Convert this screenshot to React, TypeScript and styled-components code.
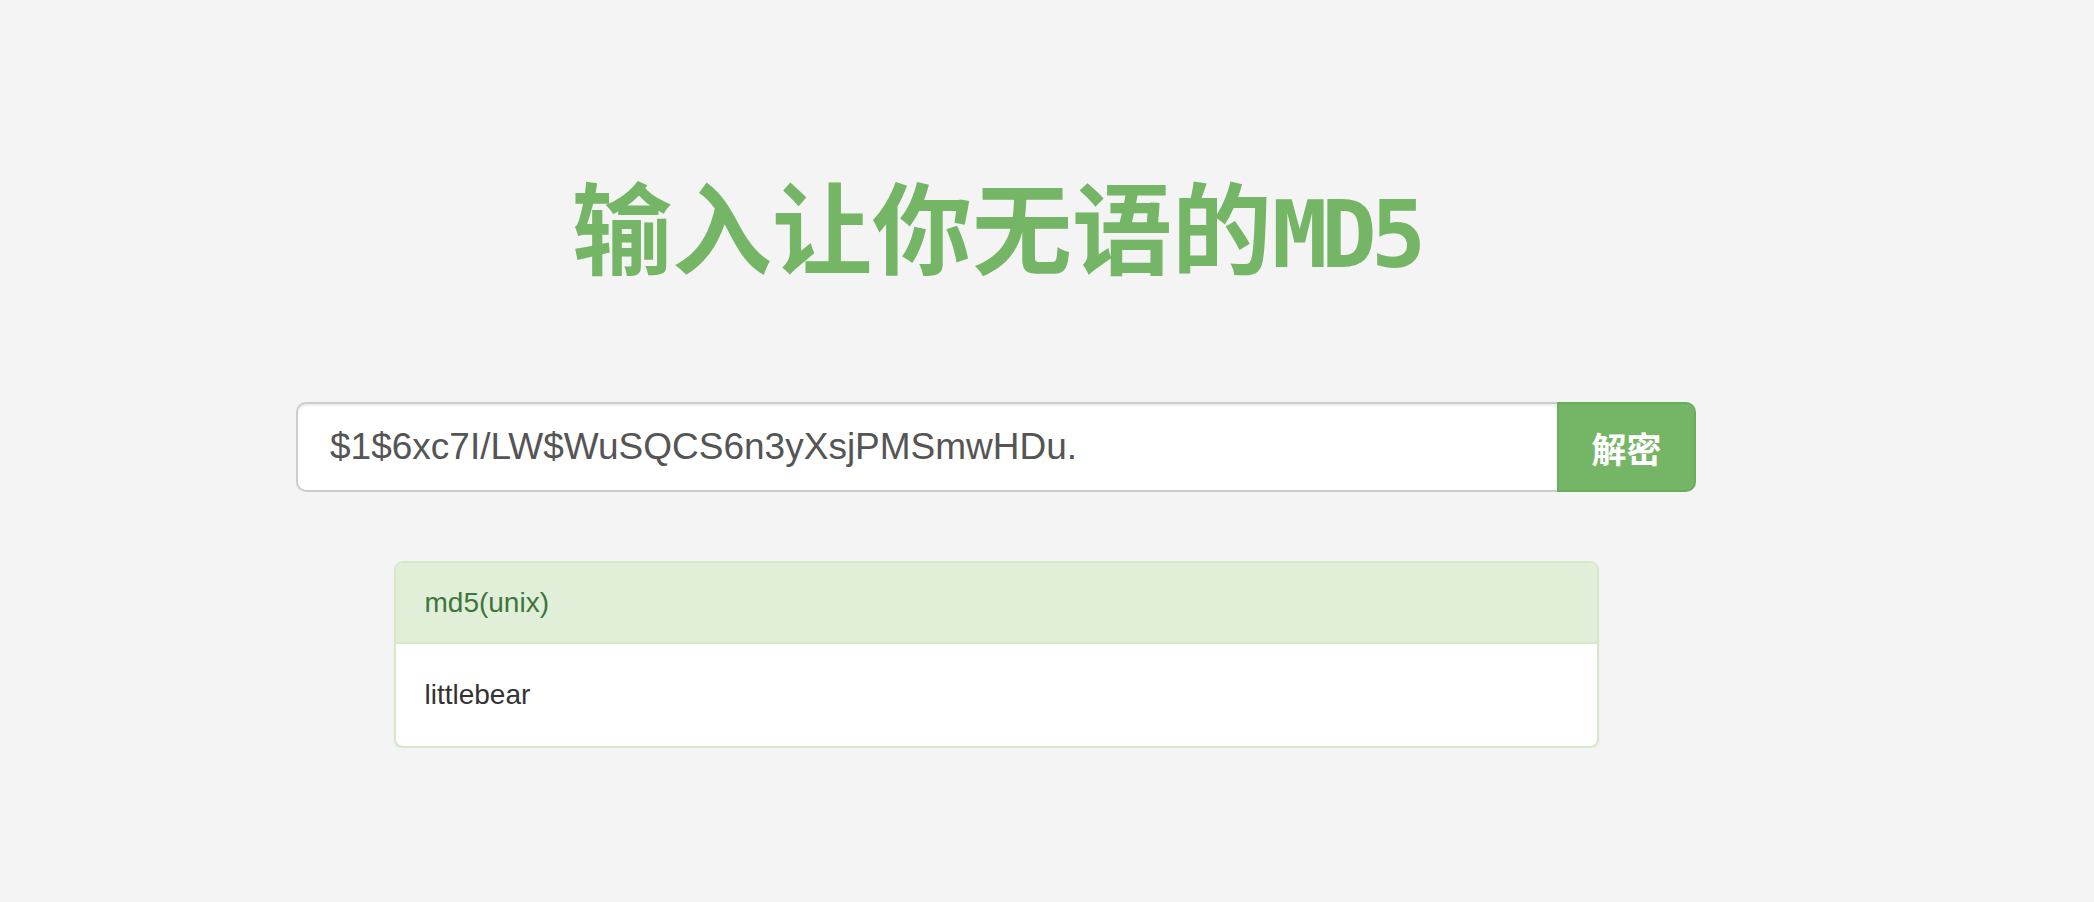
import React from 'react'
import styled, { createGlobalStyle } from 'styled-components'

const GlobalStyle = createGlobalStyle`
    html, body {
        margin: 0;
        padding: 0;
        background: #f4f4f4;
    }
    body {
        font-family: "Liberation Sans", "Noto Sans CJK SC", sans-serif;
        color: #333;
    }
`

const Page = styled.div`
    padding-right: 102px;
`

const Container = styled.div`
    width: 1400px;
    margin: 0 auto;
`

/* title */
const Title = styled.h1`
    margin: 169px 0 0;
    text-align: center;
    font-family: "Noto Sans CJK SC", sans-serif;
    font-weight: 700;
    font-size: 100px;
    line-height: 110px;
    color: #74b566;
`

const TitleLatin = styled.span`
    font-family: "DejaVu Sans Mono", monospace;
    font-size: 92px;
    letter-spacing: -6px;
`

/* search box */
const InputGroup = styled.form`
    display: flex;
    margin-top: 111px;
    height: 90px;
`

const Field = styled.input`
    flex: 1;
    min-width: 0;
    box-sizing: border-box;
    height: 90px;
    padding: 0 32px;
    border: 2px solid #ccc;
    border-right: none;
    border-radius: 10px 0 0 10px;
    background: #fff;
    box-shadow: inset 0 2px 2px rgba(0, 0, 0, 0.075);
    font-family: "Liberation Sans", sans-serif;
    font-size: 37px;
    color: #555;
    outline: none;
`

const Submit = styled.button`
    width: 139px;
    box-sizing: border-box;
    border: 2px solid #6aae5b;
    border-radius: 0 10px 10px 0;
    background: #74b566;
    color: #fff;
    font-family: "Noto Sans CJK SC", sans-serif;
    font-weight: 700;
    font-size: 35px;
    cursor: pointer;
`

/* result panel */
const Panel = styled.div`
    width: 1205px;
    margin: 69px auto 0;
    box-sizing: border-box;
    border: 2px solid #d6e9c6;
    border-radius: 9px;
    background: #fff;
    box-shadow: 0 2px 2px rgba(0, 0, 0, 0.05);
    overflow: hidden;
`

const PanelHeading = styled.div`
    padding: 21px 29px 20px;
    background: #e1efd9;
    border-bottom: 2px solid #d6e9c6;
    color: #3c763d;
    font-size: 28px;
    line-height: 38px;
`

const PanelBody = styled.div`
    padding: 31px 29px 32px;
    font-size: 28px;
    line-height: 39px;
    color: #333;
`

const App = () => {
    return (
        <Page>
            <GlobalStyle />
            <Container>
                <Title>输入让你无语的<TitleLatin>MD5</TitleLatin></Title>
                <InputGroup onSubmit={(e) => e.preventDefault()}>
                    <Field type="text" defaultValue="$1$6xc7I/LW$WuSQCS6n3yXsjPMSmwHDu." />
                    <Submit type="submit">解密</Submit>
                </InputGroup>
                <Panel>
                    <PanelHeading>md5(unix)</PanelHeading>
                    <PanelBody>littlebear</PanelBody>
                </Panel>
            </Container>
        </Page>
    )
}

export default App
